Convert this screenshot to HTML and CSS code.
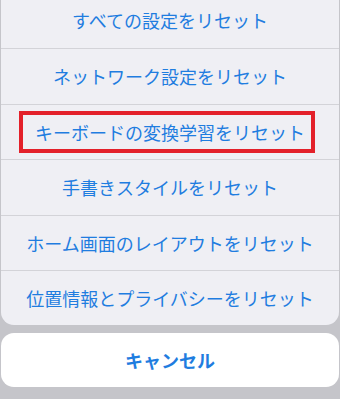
FILE: index.html
```html
<!DOCTYPE html>
<html lang="ja">
<head>
  <meta charset="UTF-8">
  <meta name="viewport" content="width=device-width, initial-scale=1.0">
  <title>リセット</title>
  <link rel="stylesheet" href="styles.css">
</head>
<body>
  <div class="sheet">
    <div class="action-group">
      <div class="action">すべての設定をリセット</div>
      <div class="action">ネットワーク設定をリセット</div>
      <div class="action marked">
        キーボードの変換学習をリセット
        <span class="highlight"></span>
      </div>
      <div class="action">手書きスタイルをリセット</div>
      <div class="action">ホーム画面のレイアウトをリセット</div>
      <div class="action">位置情報とプライバシーをリセット</div>
    </div>
    <div class="cancel">キャンセル</div>
  </div>
</body>
</html>
```

FILE: styles.css
```css
* {
  margin: 0;
  padding: 0;
  box-sizing: border-box;
}

body {
  width: 340px;
  height: 399px;
  overflow: hidden;
  background-color: #c5c5ca;
  font-family: "Noto Sans CJK JP", "Noto Sans", sans-serif;
}

.sheet {
  display: flex;
  flex-direction: column;
  padding: 0 1px;
}

.action-group {
  margin-top: -7.5px; /* 上の項目は画面外 */
  background-color: #efeff4;
  border-radius: 0 0 13px 13px;
  overflow: hidden;
}

.action {
  position: relative;
  display: flex;
  justify-content: center;
  align-items: center;
  height: 55.5px;
  font-size: 18px;
  color: #1f7de0;
}

.action + .action {
  border-top: 1px solid #d3d3d8;
}

.action:last-child {
  height: 55px;
}

.highlight {
  position: absolute;
  top: 6px;
  left: 18px;
  width: 296px;
  height: 42px;
  border: 4px solid #e3202a;
}

.cancel {
  display: flex;
  justify-content: center;
  align-items: center;
  height: 54px;
  margin-top: 8px;
  background-color: #ffffff;
  border-radius: 13px;
  font-size: 18px;
  font-weight: bold;
  color: #1f7de0;
}
```
